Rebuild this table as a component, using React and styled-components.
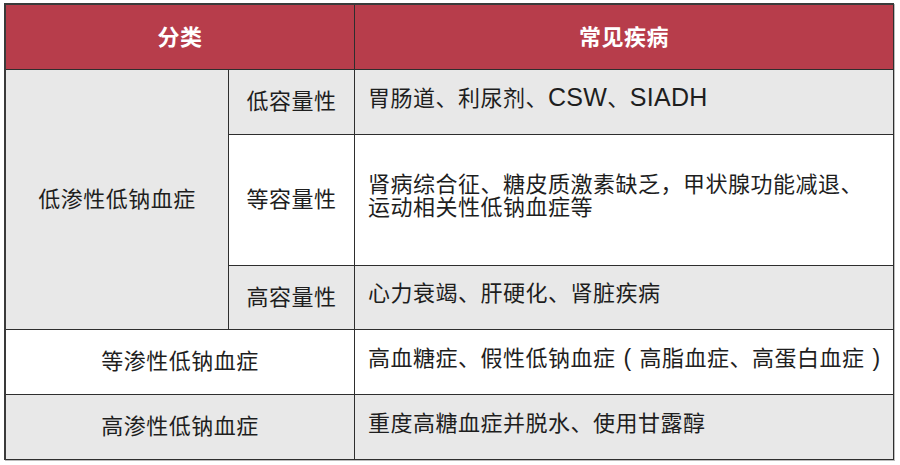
import styled, { createGlobalStyle } from "styled-components"

const GlobalStyle = createGlobalStyle`
    body {
        margin: 0;
        background: #ffffff;
        font-family: "Liberation Sans", "Noto Sans CJK SC", sans-serif;
    }
`

function App() {
    return (
        <>
            <GlobalStyle />
            <Page>
                <Table>
                    <Head $span="1 / 3">分类</Head>
                    <Head $span="3 / 4">常见疾病</Head>

                    <Cell $shade $col="1 / 2" $row="2 / 5">低渗性低钠血症</Cell>
                    <Cell $shade $col="2 / 3" $row="2 / 3">低容量性</Cell>
                    <Text $shade $col="3 / 4" $row="2 / 3">
                        胃肠道、利尿剂、<Latin>CSW</Latin>、<Latin>SIADH</Latin>
                    </Text>
                    <Cell $col="2 / 3" $row="3 / 4">等容量性</Cell>
                    <Text $col="3 / 4" $row="3 / 4">
                        {"肾病综合征、糖皮质激素缺乏，甲状腺功能减退、\n运动相关性低钠血症等"}
                    </Text>
                    <Cell $shade $col="2 / 3" $row="4 / 5">高容量性</Cell>
                    <Text $shade $col="3 / 4" $row="4 / 5">心力衰竭、肝硬化、肾脏疾病</Text>

                    <Cell $col="1 / 3" $row="5 / 6">等渗性低钠血症</Cell>
                    <Text $col="3 / 4" $row="5 / 6">
                        高血糖症、假性低钠血症<Paren>(</Paren>高脂血症、高蛋白血症<Paren>)</Paren>
                    </Text>

                    <Cell $shade $col="1 / 3" $row="6 / 7">高渗性低钠血症</Cell>
                    <Text $shade $col="3 / 4" $row="6 / 7">重度高糖血症并脱水、使用甘露醇</Text>
                </Table>
            </Page>
        </>
    )
}

export default App

const Page = styled.div`
    padding: 3px 0 0 4px;
    width: 900px;
    height: 465px;
    box-sizing: border-box;
`

const Table = styled.div`
    display: grid;
    grid-template-columns: 223px 126px 539px;
    grid-template-rows: 65px 65px 131px 64px 65px 65px;
    width: 890px;
    box-sizing: border-box;
    border-top: 2px solid #3a3a3a;
    border-left: 2px solid #3a3a3a;
    box-shadow: 1px 1px 0 #bdbdbd;
`

const Head = styled.div`
    grid-column: ${p => p.$span};
    grid-row: 1 / 2;
    display: flex;
    align-items: center;
    justify-content: center;
    padding-bottom: 4px;
    box-sizing: border-box;
    background-color: #b73d4b;
    color: #ffffff;
    font-size: 22px;
    font-weight: bold;
    letter-spacing: 0.5px;
    border-right: 1.5px solid #2e2e2e;
    border-bottom: 1.5px solid #2e2e2e;
`

const Cell = styled.div`
    grid-column: ${p => p.$col};
    grid-row: ${p => p.$row};
    display: flex;
    align-items: center;
    justify-content: center;
    padding-bottom: 6px;
    box-sizing: border-box;
    background-color: ${p => (p.$shade ? "#e8e8e8" : "#ffffff")};
    color: #1e1e1e;
    font-size: 22px;
    letter-spacing: 0.5px;
    border-right: 1.5px solid #2e2e2e;
    border-bottom: 1.5px solid #2e2e2e;
`

const Text = styled(Cell)`
    display: block;
    align-content: center;
    padding: 0 0 8px 13px;
    line-height: 23px;
    white-space: pre;
`

const Latin = styled.span`
    font-size: 25px;
    letter-spacing: 0.3px;
`

const Paren = styled.span`
    display: inline-block;
    width: 24px;
    text-align: center;
    font-size: 23px;
`
